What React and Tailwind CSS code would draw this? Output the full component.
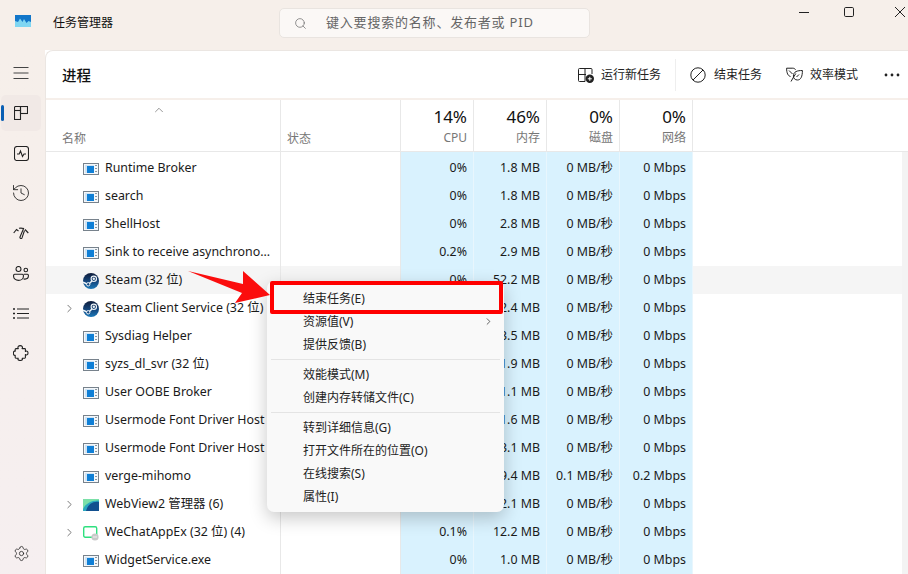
import React from 'react';
import { ChevronRight, ChevronUp, History, Search, Settings } from 'lucide-react';

const rows = [
  { name: 'Runtime Broker', cpu: '0%', mem: '1.8 MB' },
  { name: 'search', cpu: '0%', mem: '1.8 MB' },
  { name: 'ShellHost', cpu: '0%', mem: '2.8 MB' },
  { name: 'Sink to receive asynchrono...', cpu: '0.2%', mem: '2.9 MB' },
  { name: 'Steam (32 位)', cpu: '0%', mem: '52.2 MB', icon: 'steam', active: true },
  { name: 'Steam Client Service (32 位)', cpu: '0%', mem: '2.4 MB', icon: 'steam', expand: true },
  { name: 'Sysdiag Helper', cpu: '0%', mem: '3.5 MB' },
  { name: 'syzs_dl_svr (32 位)', cpu: '0%', mem: '1.9 MB' },
  { name: 'User OOBE Broker', cpu: '0%', mem: '1.1 MB' },
  { name: 'Usermode Font Driver Host', cpu: '0%', mem: '1.6 MB' },
  { name: 'Usermode Font Driver Host', cpu: '0%', mem: '3.1 MB' },
  { name: 'verge-mihomo', cpu: '0%', mem: '9.4 MB', disk: '0.1 MB/秒', net: '0.2 Mbps' },
  { name: 'WebView2 管理器 (6)', cpu: '0%', mem: '2.1 MB', icon: 'webview', expand: true },
  { name: 'WeChatAppEx (32 位) (4)', cpu: '0.1%', mem: '12.2 MB', icon: 'wechat', expand: true },
  { name: 'WidgetService.exe', cpu: '0%', mem: '1.0 MB' },
];

const menuGroups = [
  ['结束任务(E)', '资源值(V)', '提供反馈(B)'],
  ['效能模式(M)', '创建内存转储文件(C)'],
  ['转到详细信息(G)', '打开文件所在的位置(O)', '在线搜索(S)', '属性(I)'],
];

const AppIcon = () => (
  <svg width="16" height="12" viewBox="0 0 16 12">
    <rect width="16" height="12" fill="#77828c" />
    <rect x="1" y="1" width="14" height="10" fill="#f4f7fa" />
    <rect x="2" y="2" width="9" height="8" fill="#cfe4f5" />
    <rect x="4" y="3" width="7" height="7" fill="#0f7fd6" />
    <rect x="12" y="2" width="2" height="1" fill="#8a96a0" />
    <rect x="12" y="5" width="2" height="1" fill="#8a96a0" />
    <rect x="12" y="8" width="2" height="1" fill="#8a96a0" />
  </svg>
);

const SteamIcon = ({ id }) => (
  <svg width="16" height="16" viewBox="0 0 16 16">
    <defs>
      <linearGradient id={id} x1="0" y1="0" x2="0" y2="1">
        <stop offset="0" stopColor="#0f1c3a" />
        <stop offset="0.55" stopColor="#15487f" />
        <stop offset="1" stopColor="#1a78b8" />
      </linearGradient>
    </defs>
    <circle cx="8" cy="8" r="8" fill={`url(#${id})`} />
    <circle cx="10.800" cy="5.800" r="2.700" fill="none" stroke="#eef3f7" strokeWidth="1.100" />
    <circle cx="10.800" cy="5.800" r="1.200" fill="#eef3f7" />
    <path d="M0 9.300 5.200 11.500 9 8" stroke="#eef3f7" strokeWidth="1.500" fill="none" />
    <circle cx="5.200" cy="11.300" r="1.700" fill="#15487f" stroke="#eef3f7" strokeWidth="1" />
  </svg>
);

const WebViewIcon = () => (
  <svg width="16" height="12" viewBox="0 0 16 12">
    <rect width="16" height="12" fill="#12508f" />
    <path d="M0 0h16v3C10 2 5 5 3 12H0z" fill="#2aa9bf" />
    <path d="M0 0h16v1.500C9 1 3 4 0 10z" fill="#7be0a8" />
  </svg>
);

const WeChatIcon = () => (
  <svg width="16" height="16" viewBox="0 0 16 16">
    <rect x="0.700" y="1.700" width="13" height="10.500" rx="1.500" fill="#fff" stroke="#2fe07f" strokeWidth="1.400" />
    <circle cx="12" cy="12" r="3.600" fill="#c9c9c9" />
    <rect x="10" y="11.500" width="4" height="1" fill="#f2f2f2" />
  </svg>
);

const RowIcon = ({ type, id }) => {
  if (type === 'steam') return <SteamIcon id={id} />;
  if (type === 'webview') return <WebViewIcon />;
  if (type === 'wechat') return <WeChatIcon />;
  return <AppIcon />;
};

const SideItem = ({ active, children }) => (
  <div className={`relative flex h-9 w-10 items-center justify-center rounded-[5px] ${active ? 'bg-[#f1e9e6]' : ''}`}>
    {active && <span className="absolute left-0 h-4 w-[3px] rounded-full bg-[#0a5fb4]" />}
    {children}
  </div>
);

const Sidebar = () => (
  <aside className="flex w-[45px] shrink-0 flex-col items-start bg-gradient-to-b from-[#f6efea] to-[#f6eff0] pl-px text-[#222]">
    <div className="mt-[5px] flex flex-col gap-1">
      <SideItem>
        <svg width="16" height="14" viewBox="0 0 16 14" fill="none" stroke="#444" strokeWidth="1">
          <path d="M0.500 1.500h15M0.500 7h15M0.500 12.500h15" />
        </svg>
      </SideItem>
      <SideItem active>
        <svg width="14" height="14" viewBox="0 0 14 14" fill="none" stroke="#222" strokeWidth="1.100">
          <rect x="0.500" y="4.500" width="6" height="9" />
          <rect x="6.500" y="0.500" width="7" height="7" />
          <path d="M0.500 4.500V1.500a1 1 0 0 1 1-1h5v4" />
        </svg>
      </SideItem>
      <SideItem>
        <svg width="15" height="15" viewBox="0 0 15 15" fill="none" stroke="#222" strokeWidth="1.100">
          <rect x="0.500" y="0.500" width="14" height="14" rx="2.500" />
          <path d="M3 8h2.200l1.300-3 2 5.500L10 8h2" />
        </svg>
      </SideItem>
      <SideItem>
        <History size={20} strokeWidth={1.050} />
      </SideItem>
      <SideItem>
        <svg width="16" height="12" viewBox="0 0 16 12" fill="none" stroke="#222" strokeWidth="1.100">
          <path d="M0.700 6 3.500 2.500 5.500 4M6 1.300C7.500 1 9 1 10.500 1.500M12 2.500l3.300 3.500" />
          <path d="M10.800 1 7 10a1.100 1.100 0 0 0 2 .9L11.500 3.500" />
        </svg>
      </SideItem>
      <SideItem>
        <svg width="16" height="15" viewBox="0 0 16 15" fill="none" stroke="#222" strokeWidth="1.100">
          <circle cx="5.500" cy="3" r="2.500" />
          <circle cx="12.800" cy="4" r="1.800" />
          <path d="M0.600 9.300c0-.6.500-1 1-1h7.800c.6 0 1 .4 1 1v1.200c0 2-2 3.900-4.900 3.900S.6 12.500.6 10.500z" />
          <path d="M10.800 8.300h3.600c.5 0 1 .4 1 1v.8c0 1.900-1.700 3-3.400 3-.5 0-1-.1-1.400-.2" />
        </svg>
      </SideItem>
      <SideItem>
        <svg width="16" height="11" viewBox="0 0 16 11" fill="none" stroke="#222" strokeWidth="1">
          <path d="M4 1h12M4 5.500h12M4 10h12" />
          <path d="M0 1h2M0 5.500h2M0 10h2" strokeWidth="1.500" />
        </svg>
      </SideItem>
      <SideItem>
        <svg width="16" height="16" viewBox="0 0 16 16" fill="none" stroke="#222" strokeWidth="1.100" strokeLinejoin="round">
          <path d="M5.300 3.600C4.200 1.500 5.800.6 7.200.6s3 .9 1.900 3h2.600c.4 0 .7.300.7.700v2.100c1.800-1 2.600.4 2.600 1.600s-.8 2.600-2.600 1.600v3c0 .4-.3.600-.7.600H9.200c.8 1.800-.7 2.300-2 2.300s-2.800-.5-2-2.300H2.900c-.4 0-.7-.2-.7-.6v-2.300c-1.400.5-1.800-.9-1.800-2s.4-2.700 1.800-2V4.300c0-.4.300-.7.700-.7z" />
        </svg>
      </SideItem>
    </div>
    <div className="mt-auto mb-[3px]">
      <SideItem>
        <Settings size={17} strokeWidth={1.100} />
      </SideItem>
    </div>
  </aside>
);

const TitleBar = () => (
  <header className="flex h-[50px] shrink-0 items-start bg-[#f6efea]">
    <svg className="ml-[15px] mt-[15px]" width="16" height="12" viewBox="0 0 16 12">
      <rect width="16" height="12" fill="#7fd6f2" />
      <path d="M0 0h16v7l-2.500-1-2 2-2.500-4-1.500 3L5 3.500 3 7 0 6z" fill="#1276c9" />
    </svg>
    <span className="ml-[22px] mt-[15px] text-xs leading-4 text-[#111]">任务管理器</span>
    <div className="ml-[166px] mt-2 flex h-[30px] w-[311px] items-center rounded-[5px] border border-[#e9e4e0] bg-[#fbf8f6] pl-[14px] text-[13px] tracking-[0.8px] text-[#666]">
      <Search size={13} strokeWidth={1.300} className="text-[#666]" />
      <span className="ml-[19px]">键入要搜索的名称、发布者或 PID</span>
    </div>
    <div className="ml-auto flex text-[#222]">
      <svg className="mr-[35px] mt-[7px]" width="10" height="10" viewBox="0 0 10 10" stroke="#222" strokeWidth="1">
        <path d="M0 5.500h10" />
      </svg>
      <svg className="mr-[41px] mt-[7px]" width="10" height="10" viewBox="0 0 10 10" fill="none" stroke="#222" strokeWidth="1">
        <rect x="0.500" y="0.500" width="9" height="9" rx="1.200" />
      </svg>
      <svg className="mr-[3px] mt-[7px]" width="10" height="10" viewBox="0 0 10 10" stroke="#222" strokeWidth="1">
        <path d="M0 0l10 10M10 0L0 10" />
      </svg>
    </div>
  </header>
);

const Toolbar = () => (
  <div className="flex h-[49px] shrink-0 items-center border-b-2 border-[#f6efea] pl-[16px] text-xs text-[#222]">
    <span className="mt-0.5 text-[14.500px] font-medium text-[#111]">进程</span>
    <div className="ml-auto flex items-center">
      <svg width="16" height="16" viewBox="0 0 16 16" fill="none" stroke="#222" strokeWidth="1">
        <path d="M7 14.500H1.500a1 1 0 0 1-1-1v-11a1 1 0 0 1 1-1H13a1 1 0 0 1 1 1V7" />
        <path d="M0.500 7.500h7.500M7 1.500v13" />
        <circle cx="11.800" cy="11.800" r="4.200" fill="#222" stroke="none" />
        <path d="M11.800 9.800v4M9.800 11.800h4" stroke="#fff" />
      </svg>
      <span className="ml-[7px]">运行新任务</span>
      <span className="mx-[14px] h-8 w-px bg-[#eeeeee]" />
      <svg width="16" height="16" viewBox="0 0 16 16" fill="none" stroke="#222" strokeWidth="1">
        <circle cx="8" cy="8" r="7.200" />
        <path d="M3 13L13 3" />
      </svg>
      <span className="ml-2">结束任务</span>
      <svg className="ml-6" width="17" height="15" viewBox="0 0 17 15" fill="none" stroke="#222" strokeWidth="1">
        <path d="M4.500 9.500C2 9 .6 6 .6 1.200h6.200c1.300 0 2.200.6 2.800 1.600" />
        <path d="M16.400 3.500c-5 0-9 1-9 5.500 0 2.300 1.600 4 4 4 3.500 0 5-3.500 5-9.500z" />
        <path d="M3 3.500l3.500 3.500M9.800 6.500 7 11l-2 3.500" />
        <path d="M10.500 10 13 7.500" />
      </svg>
      <span className="ml-[7px]">效率模式</span>
      <svg className="ml-[26px] mr-2" width="16" height="4" viewBox="0 0 16 4" fill="#222">
        <circle cx="2" cy="2" r="1.400" />
        <circle cx="8" cy="2" r="1.400" />
        <circle cx="14" cy="2" r="1.400" />
      </svg>
    </div>
  </div>
);

const StatHead = ({ pct, label }) => (
  <div className="flex w-[73px] shrink-0 flex-col items-end border-r border-[#e8e8e8] pr-[6px] pt-[5px]">
    <span className="text-[17px] leading-6 text-[#111]">{pct}</span>
    <span className="-mt-px text-xs leading-5 text-[#777]">{label}</span>
  </div>
);

const TableHead = () => (
  <div className="flex h-[52px] shrink-0 border-b border-[#e8e8e8]">
    <div className="relative flex w-[235px] shrink-0 flex-col border-r border-[#e8e8e8] pl-4">
      <ChevronUp size={14} strokeWidth={1.500} className="absolute left-[106px] top-[3px] text-[#888]" />
      <span className="mt-[29px] text-xs leading-5 text-[#777]">名称</span>
    </div>
    <div className="flex w-[120px] shrink-0 flex-col border-r border-[#e8e8e8] pl-1.5">
      <span className="mt-[29px] text-xs leading-5 text-[#777]">状态</span>
    </div>
    <StatHead pct="14%" label="CPU" />
    <StatHead pct="46%" label="内存" />
    <StatHead pct="0%" label="磁盘" />
    <StatHead pct="0%" label="网络" />
  </div>
);

const Cell = ({ children }) => (
  <div className="flex w-[73px] shrink-0 items-center justify-end border-r border-[#e8f6fd] bg-[#d9f2fe] pr-[6px] whitespace-nowrap">
    {children}
  </div>
);

const Row = ({ row, index }) => (
  <div className={`flex ${index === 0 ? 'h-[30px] [&>*]:pt-[3px]' : 'h-7 [&>*]:pt-px'} ${row.active ? 'bg-[#f5f5f5]' : ''}`}>
    <div className="flex w-[235px] shrink-0 items-center overflow-hidden border-r border-[#e8e8e8] pl-[17px] whitespace-nowrap">
      <span className="flex w-[20px] shrink-0">
        {row.expand && <ChevronRight size={13} strokeWidth={1.600} className="text-[#666]" />}
      </span>
      <span className="flex w-4 shrink-0 items-center justify-center">
        <RowIcon type={row.icon} id={`steam-${index}`} />
      </span>
      <span className="ml-1.5">{row.name}</span>
    </div>
    <div className="w-[120px] shrink-0 border-r border-[#e8e8e8]" />
    <Cell>{row.cpu}</Cell>
    <Cell>{row.mem}</Cell>
    <Cell>{row.disk || '0 MB/秒'}</Cell>
    <Cell>{row.net || '0 Mbps'}</Cell>
  </div>
);

const ContextMenu = () => (
  <div className="absolute left-[267px] top-[281px] w-[237px] rounded-[7px] bg-[#f9f9f9] pt-1.5 pb-1 text-xs text-[#222] shadow-[0_6px_18px_rgba(0,0,0,0.22)]">
    {menuGroups.map((group, i) => (
      <div key={group[0]}>
        {i > 0 && <div className="mx-1 my-[3px] h-px bg-[#e4e4e4]" />}
        {group.map((item) => (
          <div key={item} className="relative flex h-[23px] items-center pl-9">
            {item}
            {item === '资源值(V)' && (
              <ChevronRight size={11} strokeWidth={1.500} className="absolute right-[10px]" />
            )}
          </div>
        ))}
      </div>
    ))}
  </div>
);

const Annotation = () => (
  <>
    <div className="absolute left-[270px] top-[281px] h-[33px] w-[233px] rounded-[2px] border-4 border-[#ff0000]" />
    <svg className="absolute left-[186px] top-[268px]" width="86" height="36" viewBox="0 0 86 36">
      <path d="M2 3 L57 16 L57 3 L84 27 L49 35 L56 25 Z" fill="#fb0d0d" />
    </svg>
  </>
);

export default function App() {
  return (
    <div
      className="relative flex h-[574px] w-[908px] flex-col overflow-hidden bg-white text-[12.400px] text-[#1a1a1a]"
      style={{ fontFamily: '"Noto Sans", "Noto Sans CJK SC", sans-serif' }}
    >
      <TitleBar />
      <div className="flex min-h-0 flex-1">
        <Sidebar />
        <main className="flex min-w-0 flex-1 flex-col overflow-hidden rounded-tl-lg border-l border-t border-[#ebe6e2] bg-white">
          <Toolbar />
          <TableHead />
          <div className="flex min-h-0 flex-1">
            <div className="min-w-0 flex-1">
              {rows.map((row, i) => (
                <Row key={`${row.name}-${i}`} row={row} index={i} />
              ))}
            </div>
            <div className="w-1.5 shrink-0 bg-[#f3f3f3]" />
          </div>
        </main>
      </div>
      <ContextMenu />
      <Annotation />
    </div>
  );
}
